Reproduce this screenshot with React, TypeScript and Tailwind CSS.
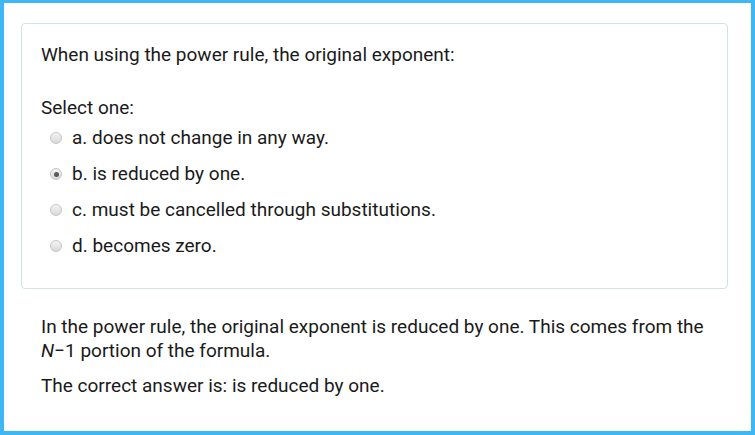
const options = [
  { id: 'a', text: 'does not change in any way.', checked: false },
  { id: 'b', text: 'is reduced by one.', checked: true },
  { id: 'c', text: 'must be cancelled through substitutions.', checked: false },
  { id: 'd', text: 'becomes zero.', checked: false },
];

function Radio({ checked }: { checked: boolean }) {
  return (
    <span className="flex h-[12px] w-[12px] items-center justify-center rounded-full border border-[#c4c4c4] bg-gradient-to-b from-[#f4f4f4] to-[#d9d9d9]">
      {checked && <span className="h-[5px] w-[5px] rounded-full bg-[#5a5a5a]" />}
    </span>
  );
}

export default function App() {
  return (
    <div
      className="h-[435px] w-[755px] overflow-hidden border-x-4 border-t-[3px] border-b-4 border-[#3db8f4] bg-white text-[19px] leading-[24px] text-[#1a1a1a]"
      style={{ fontFamily: 'Roboto, "Liberation Sans", sans-serif' }}
    >
      <div className="ml-[17px] mr-[23px] mt-[20px] rounded-[4px] border border-[#d2e3e3] pb-[24px] pl-[19px] pr-4 pt-[19px]">
        <p>When using the power rule, the original exponent:</p>
        <p className="mt-[29px]">Select one:</p>
        <div className="flex flex-col">
          {options.map((o) => (
            <label key={o.id} className="flex h-[36px] items-center">
              <span className="ml-[9px] mr-[10px]">
                <Radio checked={o.checked} />
              </span>
              <span>
                {o.id}. {o.text}
              </span>
            </label>
          ))}
        </div>
      </div>
      <div className="mt-[26px] pl-[37px] pr-6">
        <p>
          In the power rule, the original exponent is reduced by one. This comes from the <i>N</i>−1
          portion of the formula.
        </p>
        <p className="mt-[11px]">The correct answer is: is reduced by one.</p>
      </div>
    </div>
  );
}
